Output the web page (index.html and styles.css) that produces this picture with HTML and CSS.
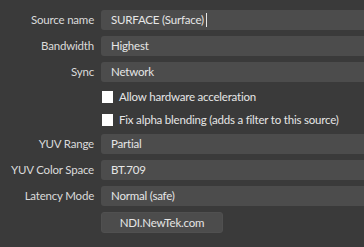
FILE: index.html
```html
<!DOCTYPE html>
<html lang="en">
<head>
    <meta charset="UTF-8">
    <title>NDI Source Properties</title>
    <link rel="stylesheet" href="styles.css">
</head>
<body>
    <div class="props">
        <label class="prop-label">Source name</label>
        <div class="field">SURFACE (Surface)<span class="caret"></span></div>

        <label class="prop-label">Bandwidth</label>
        <div class="field">Highest</div>

        <label class="prop-label">Sync</label>
        <div class="field">Network</div>

        <div></div>
        <div class="check-row"><span class="box"></span>Allow hardware acceleration</div>

        <div></div>
        <div class="check-row"><span class="box"></span>Fix alpha blending (adds a filter to this source)</div>

        <label class="prop-label">YUV Range</label>
        <div class="field">Partial</div>

        <label class="prop-label">YUV Color Space</label>
        <div class="field">BT.709</div>

        <label class="prop-label">Latency Mode</label>
        <div class="field">Normal (safe)</div>

        <div></div>
        <div><button class="link-btn">NDI.NewTek.com</button></div>
    </div>
</body>
</html>
```

FILE: styles.css
```css
body {
    margin: 0;
    background-color: #3a3a3a;
    font-family: Lato, sans-serif;
    font-size: 11.5px;
    letter-spacing: -0.2px;
    color: #e6e6e6;
    overflow: hidden;
}
.props {
    display: grid;
    grid-template-columns: 94px 1fr;
    column-gap: 7px;
    row-gap: 6px;
    padding-top: 10px;
    margin-right: -10px;
}
.prop-label {
    text-align: right;
    line-height: 20px;
    color: #dadada;
}
.field {
    height: 20px;
    line-height: 20px;
    padding-left: 10px;
    background-color: #4c4c4c;
    border-radius: 3px 0 0 3px;
    white-space: nowrap;
}
.caret {
    display: inline-block;
    width: 1px;
    height: 14px;
    margin-left: 2px;
    vertical-align: -3px;
    background-color: #e6e6e6;
}
.check-row {
    display: flex;
    align-items: center;
    height: 17px;
    white-space: nowrap;
}
.box {
    width: 11px;
    height: 12px;
    margin-left: 1px;
    margin-right: 6px;
    background-color: #ffffff;
}
.link-btn {
    width: 122px;
    height: 21px;
    padding: 0;
    font-family: inherit;
    font-size: 11.5px;
    letter-spacing: -0.2px;
    color: #e6e6e6;
    background-color: #4c4c4c;
    border: 1px solid #505050;
    border-radius: 3px;
}
```
